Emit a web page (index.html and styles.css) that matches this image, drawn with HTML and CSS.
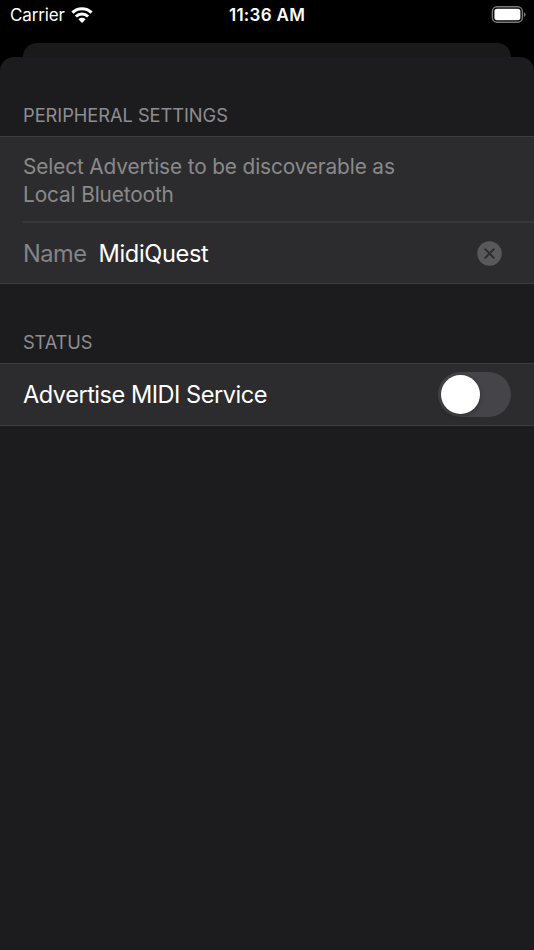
FILE: index.html
```
<!DOCTYPE html>
<html lang="en">
<head>
  <meta charset="UTF-8">
  <meta name="viewport" content="width=device-width, initial-scale=1.0">
  <title>Peripheral Settings</title>
  <link rel="stylesheet" href="styles.css">
</head>
<body>
  <header class="status-bar">
    <div class="carrier">
      <span class="carrier-name">Carrier</span>
      <svg class="wifi" width="22" height="16" viewBox="0 0 22 16">
        <g fill="none" stroke="#fff" stroke-width="3">
          <path d="M1.4 5.7a13.8 13.8 0 0 1 19.2 0"/>
          <path d="M4.9 9.5a8.8 8.8 0 0 1 12.2 0"/>
        </g>
        <path d="M11 15.9 7.4 12.3a5.1 5.1 0 0 1 7.2 0z" fill="#fff"/>
      </svg>
    </div>
    <span class="time">11:36 AM</span>
    <svg class="battery" width="35" height="18" viewBox="0 0 35 18">
      <rect x="1.4" y="0.8" width="30" height="15.4" rx="4.6" fill="none" stroke="#7b7b7b" stroke-width="1.4"/>
      <rect x="3.4" y="2.8" width="26" height="11.4" rx="2.6" fill="#fff"/>
      <path d="M33 6.2q1.6.6 1.6 2.4t-1.6 2.4z" fill="#7b7b7b"/>
    </svg>
  </header>
  <div class="back-sheet"></div>
  <main class="sheet">
    <h2 class="peripheral-title">PERIPHERAL SETTINGS</h2>
    <section class="group">
      <p class="hint">Select Advertise to be discoverable as<br>Local Bluetooth</p>
      <div class="row name-row">
        <label>Name</label>
        <span class="value">MidiQuest</span>
        <svg class="clear" width="25" height="25" viewBox="0 0 25 25">
          <circle cx="12.5" cy="12.5" r="12.2" fill="#59595b"/>
          <path d="M8.2 8.2l8.6 8.6M16.8 8.2l-8.6 8.6" stroke="#2c2c2e" stroke-width="1.9" stroke-linecap="round"/>
        </svg>
      </div>
    </section>
    <h2 class="status-title">STATUS</h2>
    <section class="group">
      <div class="row">
        <span class="advertise">Advertise MIDI Service</span>
        <div class="switch"><div class="knob"></div></div>
      </div>
    </section>
  </main>
</body>
</html>
```
FILE: styles.css
```
* {
  box-sizing: border-box;
}
body {
  margin: 0;
  height: 950px;
  display: flex;
  flex-direction: column;
  overflow: hidden;
  background: #000;
  color: #fff;
  font-family: Inter, "Liberation Sans", sans-serif;
}
.status-bar {
  height: 43px;
  padding: 0 8px 0 10px;
  display: grid;
  grid-template-columns: 1fr auto 1fr;
  align-items: start;
  font-size: 17px;
  line-height: 30px;
}
.carrier {
  display: flex;
  gap: 6px;
}
.carrier-name {
  letter-spacing: -0.12px;
}
.wifi {
  margin-top: 7px;
}
.time {
  margin-left: -2px;
  font-weight: 600;
  letter-spacing: 0.3px;
}
.battery {
  justify-self: end;
  margin-top: 6px;
}
.back-sheet {
  flex: none;
  height: 14px;
  margin: 0 23px;
  border-radius: 14px 14px 0 0;
  background: #1a1a1a;
}
.sheet {
  flex: 1;
  border-radius: 14px 14px 0 0;
  background: #1c1c1e;
}
h2 {
  margin: 0;
  height: 79px;
  padding: 47px 23px 0;
  font-size: 18.3px;
  line-height: 22px;
  font-weight: 400;
  color: #8d8d93;
}
.peripheral-title {
  letter-spacing: -0.05px;
}
.status-title {
  letter-spacing: -0.15px;
}
.group {
  background: #2c2c2e;
  border-top: 1px solid #3d3d40;
  border-bottom: 1px solid #3d3d40;
}
.hint {
  height: 86px;
  margin: 0 0 0 23px;
  padding-top: 16px;
  border-bottom: 2px solid #38383a;
  font-size: 20.8px;
  line-height: 28px;
  letter-spacing: -0.12px;
  color: #8a8a8a;
}
.row {
  display: flex;
  align-items: center;
  height: 61px;
  padding: 0 23px;
  font-size: 23.6px;
  letter-spacing: -0.5px;
}
.name-row {
  height: 60px;
}
.name-row label {
  width: 75.5px;
  color: #848486;
}
.value {
  letter-spacing: -0.35px;
}
.clear {
  margin-left: auto;
  margin-right: 9px;
}
.switch {
  width: 73px;
  height: 45px;
  margin-left: auto;
  padding: 3px;
  border-radius: 23px;
  background: #454549;
}
.knob {
  width: 39px;
  height: 39px;
  border-radius: 50%;
  background: #fff;
  box-shadow: 0 2px 5px rgba(0, 0, 0, 0.3);
}
```
